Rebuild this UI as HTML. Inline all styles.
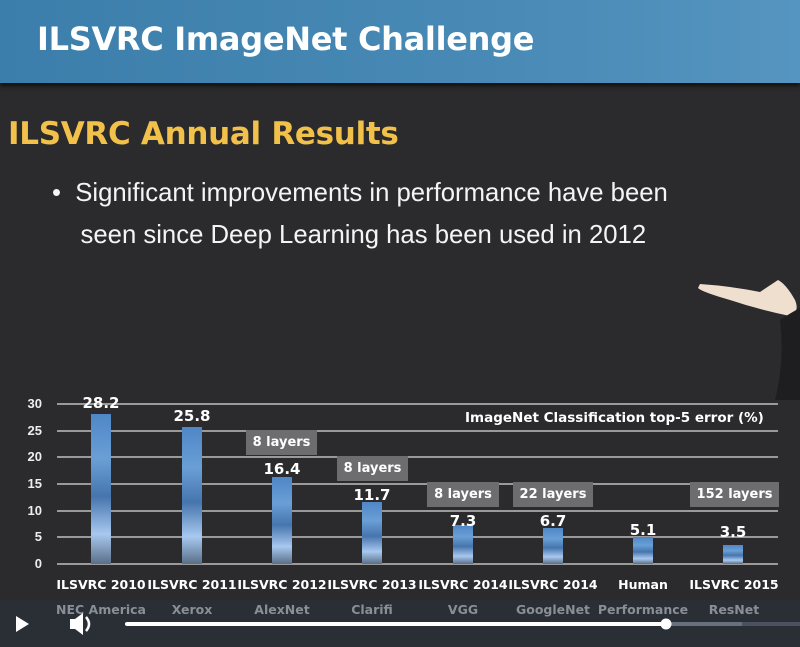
<!DOCTYPE html>
<html><head><meta charset="utf-8"><style>
*{margin:0;padding:0;box-sizing:border-box}
body{width:800px;height:647px;overflow:hidden;background:#2b2b2d;position:relative;font-family:"DejaVu Sans","Liberation Sans",sans-serif}
.hdr{position:absolute;left:0;top:0;width:800px;height:83px;background:linear-gradient(90deg,#3c7eab,#4889b5 60%,#5595c0);box-shadow:0 3px 4px #111}
.hdr span{position:absolute;left:37px;top:20px;font-size:32px;font-weight:bold;color:#fff;letter-spacing:-0.3px}
.sub{position:absolute;left:8px;top:116px;font-size:31px;font-weight:bold;color:#f2c14a;letter-spacing:-0.3px}
.bul{position:absolute;left:52px;top:172px;font-family:"Liberation Sans Narrow","Liberation Sans",sans-serif;font-size:25.7px;line-height:42px;color:#f4f4f4}
.g{position:absolute;left:57px;width:721px;height:2px;background:#9a9a9a}
.y{position:absolute;left:22px;width:20px;text-align:right;font-size:13px;font-weight:bold;color:#eee;font-family:"Liberation Sans",sans-serif}
.bar{position:absolute;width:20px;bottom:83px;background:linear-gradient(180deg,#4f86c6,#6a9fd6 30%,#4675ad 55%,#a8c8ef 80%,#5a6f88 100%)}
.v{position:absolute;width:60px;text-align:center;font-size:15px;font-weight:bold;color:#fff;font-family:"DejaVu Sans",sans-serif}
.box{position:absolute;height:25px;background:#6d6d6f;color:#fff;font-size:13px;font-weight:bold;text-align:center;line-height:25px}
.c{position:absolute;top:577px;width:92px;text-align:center;font-size:12.5px;font-weight:bold;color:#fff}
.s{position:absolute;top:602px;width:92px;text-align:center;font-size:12.5px;font-weight:bold;color:#8a8f97}
.ctl{position:absolute;left:0;top:600px;width:800px;height:47px;background:rgba(42,47,55,0.93)}
</style></head><body>
<div class="hdr"><span>ILSVRC ImageNet Challenge</span></div>
<div class="sub">ILSVRC Annual Results</div>
<div class="bul">•&nbsp; Significant improvements in performance have been<br>&nbsp;&nbsp;&nbsp;&nbsp;seen since Deep Learning has been used in 2012</div>
<svg style="position:absolute;left:690px;top:270px" width="110" height="130"><path d="M10 14 Q40 16 70 22 L88 10 Q96 14 105 30 Q110 42 100 46 Q70 40 40 30 Q12 22 8 18 Z" fill="#efdfcf"/><path d="M90 50 Q102 42 110 38 L110 130 L85 130 Q95 90 90 50Z" fill="#1e1e20"/></svg>
<div class="g" style="top:403px"></div><div class="g" style="top:430px"></div><div class="g" style="top:456px"></div><div class="g" style="top:483px"></div><div class="g" style="top:510px"></div><div class="g" style="top:536px"></div><div class="g" style="top:563px"></div>
<div class="y" style="top:396px">30</div><div class="y" style="top:423px">25</div><div class="y" style="top:449px">20</div><div class="y" style="top:476px">15</div><div class="y" style="top:503px">10</div><div class="y" style="top:529px">5</div><div class="y" style="top:556px">0</div>
<div style="position:absolute;left:465px;top:410px;font-size:13.5px;font-weight:bold;color:#fff">ImageNet Classification top-5 error (%)</div>
<div class="bar" style="left:91px;height:150px"></div><div class="v" style="left:71px;top:394px">28.2</div>
<div class="bar" style="left:182px;height:137px"></div><div class="v" style="left:162px;top:407px">25.8</div>
<div class="bar" style="left:272px;height:87px"></div><div class="v" style="left:252px;top:460px">16.4</div>
<div class="bar" style="left:362px;height:62px"></div><div class="v" style="left:342px;top:486px">11.7</div>
<div class="bar" style="left:453px;height:39px"></div><div class="v" style="left:433px;top:512px">7.3</div>
<div class="bar" style="left:543px;height:36px"></div><div class="v" style="left:523px;top:512px">6.7</div>
<div class="bar" style="left:633px;height:27px"></div><div class="v" style="left:613px;top:521px">5.1</div>
<div class="bar" style="left:723px;height:19px"></div><div class="v" style="left:703px;top:523px">3.5</div>
<div class="box" style="left:246px;top:430px;width:71px">8 layers</div>
<div class="box" style="left:337px;top:456px;width:71px">8 layers</div>
<div class="box" style="left:427px;top:482px;width:72px">8 layers</div>
<div class="box" style="left:513px;top:482px;width:80px">22 layers</div>
<div class="box" style="left:690px;top:482px;width:89px">152 layers</div>
<div class="c" style="left:55px">ILSVRC 2010</div><div class="c" style="left:146px">ILSVRC 2011</div><div class="c" style="left:236px">ILSVRC 2012</div><div class="c" style="left:326px">ILSVRC 2013</div><div class="c" style="left:417px">ILSVRC 2014</div><div class="c" style="left:507px">ILSVRC 2014</div><div class="c" style="left:597px">Human</div><div class="c" style="left:688px">ILSVRC 2015</div>
<div class="ctl"></div>
<div class="s" style="left:55px">NEC America</div><div class="s" style="left:146px">Xerox</div><div class="s" style="left:236px">AlexNet</div><div class="s" style="left:326px">Clarifi</div><div class="s" style="left:417px">VGG</div><div class="s" style="left:507px">GoogleNet</div><div class="s" style="left:597px">Performance</div><div class="s" style="left:688px">ResNet</div>
<svg style="position:absolute;left:0;top:600px" width="800" height="47">
<path d="M16 16 L29 24 L16 32 Z" fill="#fff"/>
<path d="M70 19 H75 L83 13 V35 L75 29 H70 Z" fill="#fff"/>
<path d="M86 17 Q92 24 86 31" stroke="#fff" stroke-width="2.5" fill="none"/>
<rect x="125" y="22" width="540" height="4" rx="2" fill="#fff"/>
<rect x="665" y="22" width="77" height="4" fill="#66707e"/>
<rect x="742" y="22" width="58" height="4" fill="#4a5260"/>
<circle cx="666" cy="24" r="5.5" fill="#fff"/>
</svg>
</body></html>
